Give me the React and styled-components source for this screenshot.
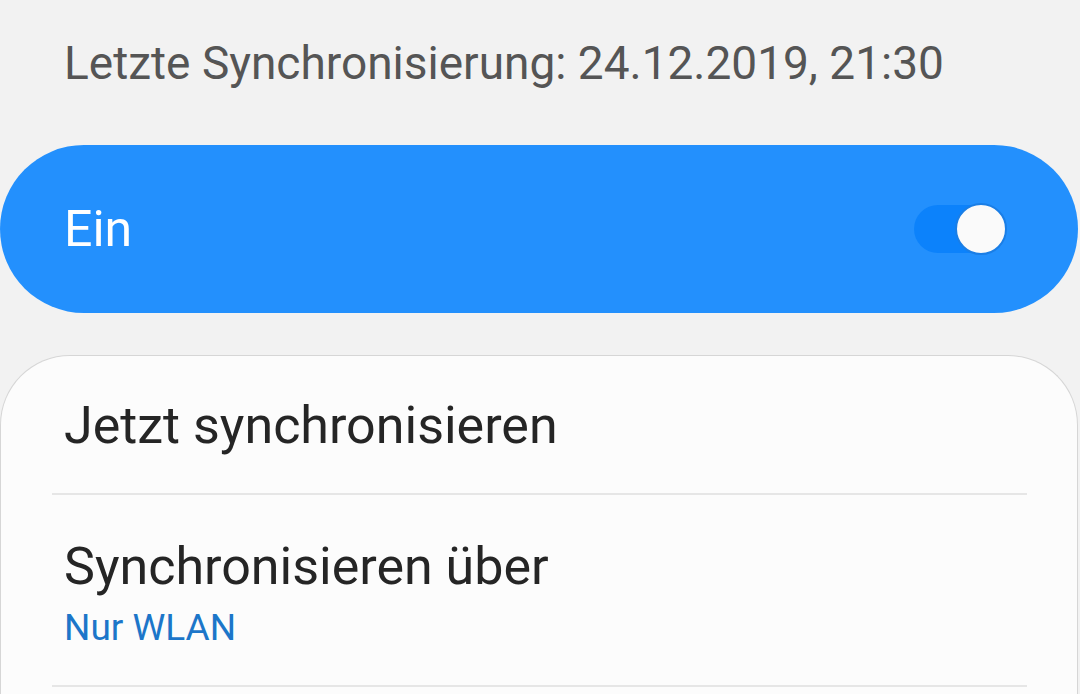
import styled, { createGlobalStyle } from 'styled-components'

const GlobalStyle = createGlobalStyle`
    body {
        margin: 0;
        background-color: #f2f2f2;
        font-family: Roboto, 'Noto Sans', sans-serif;
    }
`

export default function App() {
    return (
        <>
            <GlobalStyle />
            <Page>
                <LastSync>Letzte Synchronisierung: 24.12.2019, 21:30</LastSync>

                <MasterSwitch>
                    <span>Ein</span>
                    <Toggle>
                        <Track />
                        <Thumb />
                    </Toggle>
                </MasterSwitch>

                <Card>
                    <Row>
                        <Title>Jetzt synchronisieren</Title>
                    </Row>
                    <Divider />
                    <Row $top={42} $bottom={35}>
                        <Title>Synchronisieren über</Title>
                        <Subtitle>Nur WLAN</Subtitle>
                    </Row>
                    <Divider />
                </Card>
            </Page>
        </>
    )
}

const Page = styled.div`
    display: flex;
    flex-direction: column;
    width: 1080px;
    height: 694px;
    overflow: hidden;
`

const LastSync = styled.p`
    margin: 0;
    padding: 35px 0 0 64px;
    font-size: 46px;
    line-height: 56px;
    color: #555555;
`

const MasterSwitch = styled.div`
    display: flex;
    justify-content: space-between;
    align-items: center;
    height: 168px;
    margin: 54px 2px 0 0;
    padding: 0 71px 0 64px;
    border-radius: 84px;
    background-color: #2390fd;

    span {
        font-size: 50px;
        color: #ffffff;
    }
`

const Toggle = styled.div`
    position: relative;
    display: flex;
    align-items: center;
    width: 93px;
    height: 52px;
`

const Track = styled.div`
    width: 88px;
    height: 48px;
    border-radius: 24px;
    background-color: #0c82fb;
`

const Thumb = styled.div`
    position: absolute;
    right: 0;
    top: 0;
    width: 48px;
    height: 48px;
    border-radius: 50%;
    border: 2px solid #1a7ee6;
    background-color: #fafafa;
`

const Card = styled.div`
    display: flex;
    flex-direction: column;
    flex: 1;
    margin: 42px 2px 0 0;
    border: 1px solid #d6d6d6;
    border-bottom: none;
    border-radius: 70px 70px 0 0;
    background-color: #fcfcfc;
`

const Row = styled.div`
    display: flex;
    flex-direction: column;
    padding: ${p => p.$top ?? 40}px 0 ${p => p.$bottom ?? 37}px 63px;
`

const Title = styled.div`
    font-size: 52px;
    line-height: 60px;
    color: #252525;
`

const Subtitle = styled.div`
    margin-top: 9px;
    font-size: 37px;
    line-height: 44px;
    color: #1c76c9;
`

const Divider = styled.div`
    height: 2px;
    margin: 0 50px 0 51px;
    background-color: #e6e6e6;
`
